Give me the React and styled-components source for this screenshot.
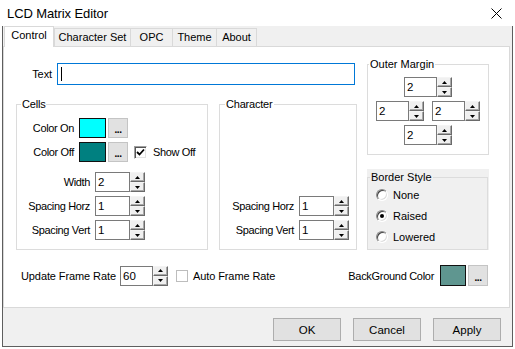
import React from 'react';
import styled, { createGlobalStyle } from 'styled-components';

const GlobalStyle = createGlobalStyle`
  html, body { margin: 0; padding: 0; background: #fff; }
  body {
    font-family: "Liberation Sans", Arial, sans-serif;
    font-size: 11px;
    color: #000;
  }
  * { box-sizing: border-box; }
`;

const Window = styled.div`
  width: 513px;
  display: flex;
  flex-direction: column;
`;

const TitleBar = styled.div`
  height: 26px;
  background: #fff;
  display: flex;
  align-items: center;
  justify-content: space-between;
  padding: 0 11px 0 7px;
`;

const Title = styled.span`
  font-size: 13px;
  letter-spacing: -0.1px;
`;

const Frame = styled.div`
  margin-left: 2px;
  width: 511px;
  background: #f0f0f0;
  border: 1px solid #5e5e5e;
  border-top: none;
  display: flex;
  flex-direction: column;
  padding-bottom: 5px;
`;

const TabStrip = styled.div`
  display: flex;
  align-items: flex-end;
  height: 20px;
  padding-left: 1px;
`;

const Tab = styled.div`
  width: ${(p) => p.$w}px;
  height: ${(p) => (p.$active ? 21 : 18)}px;
  margin-bottom: ${(p) => (p.$active ? -1 : 0)}px;
  margin-left: ${(p) => p.$ml || 0}px;
  background: ${(p) => (p.$active ? '#fff' : '#f0f0f0')};
  border: 1px solid #d9d9d9;
  border-bottom: none;
  position: relative;
  z-index: ${(p) => (p.$active ? 1 : 0)};
  display: flex;
  justify-content: center;
  align-items: flex-start;
  padding-top: 2px;
  line-height: 13px;
  white-space: nowrap;
`;

const Panel = styled.div`
  width: 507px;
  height: 262px;
  background: #fff;
  border: 1px solid #d9d9d9;
  padding: 11px 0 0 12px;
  display: grid;
  grid-template-columns: 341px 122px;
  column-gap: 10px;
  align-content: start;
`;

const Column = styled.div`
  display: flex;
  flex-direction: column;
  padding-top: ${(p) => p.$pt || 0}px;
`;

const Row = styled.div`
  display: flex;
  align-items: center;
  height: ${(p) => p.$h || 20}px;
  gap: ${(p) => (p.$gap ?? 5)}px;
`;

const FieldLabel = styled.span`
  width: ${(p) => p.$w}px;
  flex-shrink: 0;
  text-align: ${(p) => p.$align || 'right'};
  white-space: nowrap;
  letter-spacing: ${(p) => p.$ls ?? -0.35}px;
`;

const PlainLabel = styled.span`
  white-space: nowrap;
  letter-spacing: ${(p) => p.$ls ?? -0.1}px;
`;

const TextBox = styled.div`
  width: 298px;
  height: 22px;
  border: 1px solid #0078d7;
  background: #fff;
  padding-left: 3px;
  display: flex;
  align-items: center;
`;

const Caret = styled.span`
  width: 1px;
  height: 14px;
  background: #000;
`;

const GroupsRow = styled.div`
  display: flex;
  gap: 11px;
  margin-top: 13px;
`;

const Group = styled.fieldset`
  width: ${(p) => p.$w}px;
  margin: 0;
  padding: 0;
  min-width: 0;
  border: 1px solid #dcdcdc;
  display: flex;
  flex-direction: column;
`;

const Legend = styled.legend`
  font-size: 11px;
  line-height: 13px;
  padding: 0 1px;
  margin-left: ${(p) => p.$offset}px;
  letter-spacing: ${(p) => p.$ls ?? 0}px;
`;

const GroupBody = styled.div`
  flex: 1;
  display: flex;
  flex-direction: column;
  justify-content: ${(p) => (p.$bottom ? 'flex-end' : 'flex-start')};
  align-items: ${(p) => p.$align || 'stretch'};
  padding: ${(p) => p.$pad};
  gap: ${(p) => p.$gap || 0}px;
`;

const Stack = styled.div`
  display: flex;
  flex-direction: column;
  gap: 4px;
  margin-top: ${(p) => p.$mt || 0}px;
`;

const Swatch = styled.div`
  width: ${(p) => p.$w}px;
  height: ${(p) => p.$h}px;
  background: ${(p) => p.$color};
  border: 1px solid #111;
`;

const EllipsisButton = styled.div`
  width: 20px;
  height: ${(p) => p.$h}px;
  background: #e1e1e1;
  border: 1px solid #c4c4c4;
  display: flex;
  align-items: flex-end;
  justify-content: center;
  padding-bottom: 4px;
  font-size: 10px;
  font-weight: bold;
  line-height: 6px;
  letter-spacing: -0.5px;
`;

const PickerWrap = styled.div`
  display: flex;
  gap: 2px;
`;

const ColorPicker = ({ color, w = 27, h = 20 }) => (
  <PickerWrap>
    <Swatch $w={w} $h={h} $color={color} />
    <EllipsisButton $h={h}>...</EllipsisButton>
  </PickerWrap>
);

const CheckField = styled.div`
  display: flex;
  align-items: center;
  gap: ${(p) => p.$gap || 6}px;
  margin-left: ${(p) => p.$ml || 0}px;
`;

const ClassicCheck = styled.div`
  width: 13px;
  height: 13px;
  background: #fff;
  border: 1px solid;
  border-color: #a0a0a0 #fff #fff #a0a0a0;
  box-shadow: inset 1px 1px 0 #555, inset -1px -1px 0 #e3e3e3;
  display: flex;
  align-items: center;
  justify-content: center;
`;

const ModernCheck = styled.div`
  width: 12px;
  height: 12px;
  background: #fff;
  border: 1px solid #bdbdbd;
`;

const SpinWrap = styled.div`
  display: flex;
  height: 20px;
`;

const SpinEdit = styled.div`
  width: ${(p) => p.$w}px;
  height: 100%;
  border: 1px solid #7a7a7a;
  background: #fff;
  padding-left: 2px;
  display: flex;
  align-items: center;
  font-size: 11.5px;
`;

const SpinButtons = styled.div`
  width: 15px;
  display: flex;
  flex-direction: column;
`;

const SpinBtn = styled.div`
  flex: 1;
  background: #f0f0f0;
  border: 1px solid;
  border-color: #f4f4f4 #6a6a6a #6a6a6a #f4f4f4;
  box-shadow: inset -1px -1px 0 #a8a8a8;
  display: flex;
  align-items: center;
  justify-content: center;
`;

const Arrow = ({ up }) => (
  <svg width="5" height="3" viewBox="0 0 5 3">
    <polygon points={up ? '2.5,0 5,3 0,3' : '0,0 5,0 2.5,3'} fill="#000" />
  </svg>
);

const Spinner = ({ value, w = 35 }) => (
  <SpinWrap>
    <SpinEdit $w={w}>{value}</SpinEdit>
    <SpinButtons>
      <SpinBtn><Arrow up /></SpinBtn>
      <SpinBtn><Arrow /></SpinBtn>
    </SpinButtons>
  </SpinWrap>
);

const MarginRow = styled.div`
  display: flex;
  gap: 8px;
`;

const RadioPanel = styled.div`
  margin-top: 14px;
  width: 122px;
  background: #f0f0f0;
  padding-top: 2px;
`;

const RadioCircle = styled.div`
  width: 12px;
  height: 12px;
  border-radius: 50%;
  background: #fff;
  border: 1px solid;
  border-color: #8a8a8a #fff #fff #8a8a8a;
  box-shadow: inset 1px 1px 0 #444, inset -1px -1px 0 #dcdcdc;
  display: flex;
  align-items: center;
  justify-content: center;
  &::after {
    content: '';
    width: 4px;
    height: 4px;
    border-radius: 50%;
    background: ${(p) => (p.$checked ? '#000' : 'transparent')};
  }
`;

const BottomRow = styled.div`
  grid-column: 1 / -1;
  display: flex;
  justify-content: space-between;
  align-items: center;
  margin-top: 15px;
  height: 21px;
  padding: 0 1px 0 5px;
`;

const Cluster = styled.div`
  display: flex;
  align-items: center;
  gap: ${(p) => p.$gap || 5}px;
`;

const ButtonRow = styled.div`
  display: flex;
  justify-content: flex-end;
  gap: 12px;
  margin-top: 10px;
  padding-right: 11px;
`;

const DialogButton = styled.div`
  width: 68px;
  height: 23px;
  background: #e1e1e1;
  border: 1px solid #adadad;
  display: flex;
  align-items: center;
  justify-content: center;
  font-size: 11.5px;
`;

const CloseIcon = () => (
  <svg width="11" height="11" viewBox="0 0 11 11">
    <path d="M0.5 0.5L10.5 10.5M10.5 0.5L0.5 10.5" stroke="#000" strokeWidth="1" />
  </svg>
);

const CheckMark = () => (
  <svg width="9" height="9" viewBox="0 0 9 9">
    <polyline points="1,4 3.5,6.5 8,1.5" fill="none" stroke="#000" strokeWidth="1.8" />
  </svg>
);

const tabs = [
  { label: 'Control', w: 50, active: true },
  { label: 'Character Set', w: 77 },
  { label: 'OPC', w: 43, ml: -1 },
  { label: 'Theme', w: 45, ml: -1 },
  { label: 'About', w: 41, ml: -1 },
];

export default function App() {
  return (
    <>
      <GlobalStyle />
      <Window>
        <TitleBar>
          <Title>LCD Matrix Editor</Title>
          <CloseIcon />
        </TitleBar>
        <Frame>
          <TabStrip>
            {tabs.map((t) => (
              <Tab key={t.label} $w={t.w} $ml={t.ml} $active={t.active}>
                {t.label}
              </Tab>
            ))}
          </TabStrip>
          <Panel>
            <Column $pt={5}>
              <Row $h={22} $gap={5}>
                <FieldLabel $w={36} $ls={-0.1}>Text</FieldLabel>
                <TextBox><Caret /></TextBox>
              </Row>
              <GroupsRow>
                <Group $w={192}>
                  <Legend $offset={4} $ls={-0.2}>Cells</Legend>
                  <GroupBody $pad="7px 0 9px 0">
                    <Stack>
                      <Row>
                        <FieldLabel $w={57}>Color On</FieldLabel>
                        <ColorPicker color="#00ffff" />
                      </Row>
                      <Row>
                        <FieldLabel $w={57}>Color Off</FieldLabel>
                        <ColorPicker color="#008080" />
                        <CheckField $ml={1} $gap={6}>
                          <ClassicCheck><CheckMark /></ClassicCheck>
                          <PlainLabel $ls={-0.35}>Show Off</PlainLabel>
                        </CheckField>
                      </Row>
                    </Stack>
                    <Stack $mt={10}>
                      <Row>
                        <FieldLabel $w={73}>Width</FieldLabel>
                        <Spinner value="2" />
                      </Row>
                      <Row>
                        <FieldLabel $w={73}>Spacing Horz</FieldLabel>
                        <Spinner value="1" />
                      </Row>
                      <Row>
                        <FieldLabel $w={73}>Spacing Vert</FieldLabel>
                        <Spinner value="1" />
                      </Row>
                    </Stack>
                  </GroupBody>
                </Group>
                <Group $w={138}>
                  <Legend $offset={5} $ls={-0.2}>Character</Legend>
                  <GroupBody $bottom $gap={4} $pad="0 0 9px 0">
                    <Row>
                      <FieldLabel $w={74}>Spacing Horz</FieldLabel>
                      <Spinner value="1" />
                    </Row>
                    <Row>
                      <FieldLabel $w={74}>Spacing Vert</FieldLabel>
                      <Spinner value="1" />
                    </Row>
                  </GroupBody>
                </Group>
              </GroupsRow>
            </Column>
            <Column>
              <Group $w={122}>
                <Legend $offset={1}>Outer Margin</Legend>
                <GroupBody $align="center" $gap={4} $pad="6px 0 9px 0">
                  <Spinner value="2" w={33} />
                  <MarginRow>
                    <Spinner value="2" w={33} />
                    <Spinner value="2" w={33} />
                  </MarginRow>
                  <Spinner value="2" w={33} />
                </GroupBody>
              </Group>
              <RadioPanel>
                <Group $w={121}>
                  <Legend $offset={2}>Border Style</Legend>
                  <GroupBody $pad="0 0 2px 8px">
                    {['None', 'Raised', 'Lowered'].map((o) => (
                      <Row key={o} $h={21} $gap={5}>
                        <RadioCircle $checked={o === 'Raised'} />
                        <PlainLabel $ls={0}>{o}</PlainLabel>
                      </Row>
                    ))}
                  </GroupBody>
                </Group>
              </RadioPanel>
            </Column>
            <BottomRow>
              <Cluster $gap={5}>
                <FieldLabel $w={94} $ls={-0.1} $align="left">Update Frame Rate</FieldLabel>
                <Spinner value="60" w={33} />
                <CheckField $ml={3} $gap={5}>
                  <ModernCheck />
                  <PlainLabel>Auto Frame Rate</PlainLabel>
                </CheckField>
              </Cluster>
              <Cluster $gap={6}>
                <PlainLabel $ls={-0.3}>BackGround Color</PlainLabel>
                <ColorPicker color="#5f9690" w={26} h={21} />
              </Cluster>
            </BottomRow>
          </Panel>
          <ButtonRow>
            <DialogButton>OK</DialogButton>
            <DialogButton>Cancel</DialogButton>
            <DialogButton>Apply</DialogButton>
          </ButtonRow>
        </Frame>
      </Window>
    </>
  );
}
